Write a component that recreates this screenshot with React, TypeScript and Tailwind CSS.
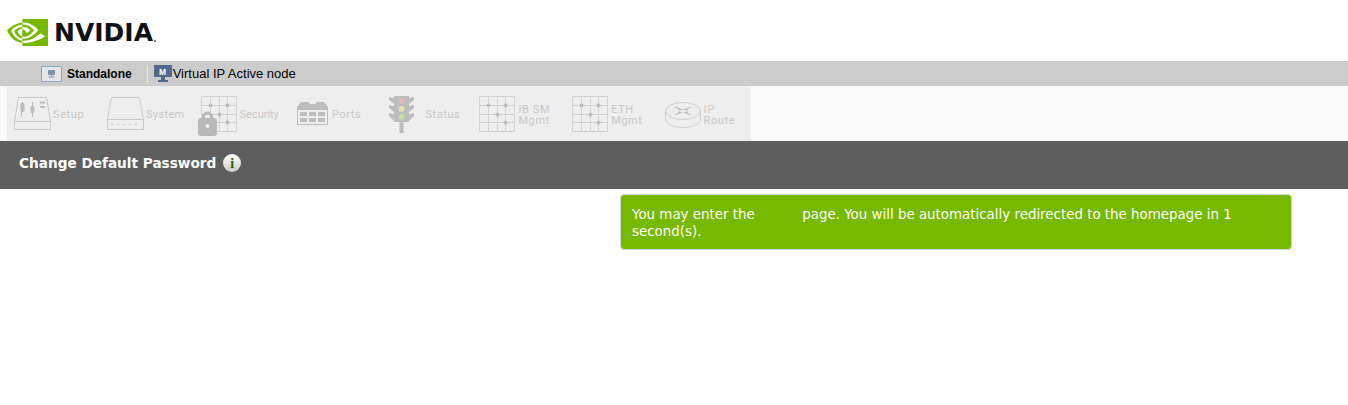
import { SiNvidia } from "react-icons/si";

const grid = "M.5 .5H35.5V35.5H.5Z M9.5 .5V35.5 M18.5 .5V35.5 M26.5 .5V35.5 M.5 9.5H35.5 M.5 18.5H35.5 M.5 26.5H35.5";

function GridDots() {
  return (
    <>
      <path d={grid} fill="none" stroke="#d2d2d2" strokeWidth="1" />
      <circle cx="9.5" cy="9.5" r="2" fill="#bdbdbd" />
      <circle cx="26.5" cy="9.5" r="2" fill="#bdbdbd" />
      <circle cx="18.5" cy="18.5" r="2" fill="#bdbdbd" />
      <circle cx="26.5" cy="26.5" r="2" fill="#bdbdbd" />
    </>
  );
}

function GridIcon() {
  return (
    <svg width="36" height="36" viewBox="0 0 36 36" className="shrink-0">
      <GridDots />
    </svg>
  );
}

function LockGridIcon() {
  return (
    <svg width="39" height="40" viewBox="0 0 39 40" className="mt-[4px] shrink-0">
      <g transform="translate(3 0)">
        <GridDots />
      </g>
      <path d="M4 21a5.5 5.5 0 0 1 11 0v3h-3v-3a2.5 2.5 0 0 0-5 0v3H4z" fill="#b8b8b8" />
      <rect x="0" y="22" width="19" height="18" rx="3" fill="#b8b8b8" />
      <circle cx="9.5" cy="30" r="2" fill="#eeeeee" />
    </svg>
  );
}

function SetupIcon() {
  return (
    <svg width="37" height="33" viewBox="0 0 37 33" className="shrink-0">
      <path d="M.5 24.5 4.5 .5H32.5L36.5 24.5V32.5H.5Z M.5 24.5H36.5" fill="none" stroke="#cacaca" />
      <path d="M7 20 8.5 5 M18.5 20V5" stroke="#bbb" />
      <rect x="6.5" y="6" width="4" height="9" rx="1.5" fill="#bbb" />
      <rect x="16.5" y="9" width="4" height="7" rx="1.5" fill="#bbb" />
      <path d="M26 5.5H31 M26 10H31" stroke="#bbb" strokeWidth="2" />
    </svg>
  );
}

function SystemIcon() {
  return (
    <svg width="37" height="33" viewBox="0 0 37 33" className="shrink-0">
      <path d="M.5 22.5 4.5 .5H32.5L36.5 22.5V32.5H.5Z M.5 22.5H36.5" fill="none" stroke="#cacaca" />
      <path d="M4 27.5H34" stroke="#cacaca" strokeWidth="1" strokeDasharray="2 4" />
    </svg>
  );
}

function PortsIcon() {
  return (
    <svg width="31" height="23" viewBox="0 0 31 23" className="shrink-0">
      <path d="M0 5 4 0H11L13 2H18L20 0H27L31 5V8H0Z" fill="#bdbdbd" />
      <path d="M.5 8V22.5H30.5V8" fill="none" stroke="#bdbdbd" />
      <path d="M3 10H10V14H3Z M12 10H19V14H12Z M21 10H28V14H21Z M3 16H10V20H3Z M12 16H19V20H12Z M21 16H28V20H21Z" fill="#bdbdbd" />
    </svg>
  );
}

function StatusIcon() {
  return (
    <svg width="25" height="37" viewBox="0 0 25 37" className="mt-[2px] shrink-0">
      <path d="M10.5 26h4v11h-4z" fill="#bdbdbd" />
      <path d="M5 0H20V2L25 1V4L20 8V10L25 9V12L20 16V18L25 17V20L19 26H6L0 20V17L5 18V16L0 12V9L5 10V8L0 4V1L5 2Z" fill="#bdbdbd" />
      <circle cx="12.5" cy="5" r="3" fill="#e8b5b5" />
      <circle cx="12.5" cy="13" r="3" fill="#e8dfa8" />
      <circle cx="12.5" cy="21" r="3" fill="#c5dc9b" />
    </svg>
  );
}

function RouteIcon() {
  return (
    <svg width="36" height="26" viewBox="0 0 36 26" className="mt-[2px] shrink-0">
      <path d="M.5 9V17C.5 22 9 25.500 18 25.500S35.500 22 35.500 17V9" fill="none" stroke="#cfcfcf" />
      <ellipse cx="18" cy="9" rx="17.500" ry="8.500" fill="none" stroke="#cfcfcf" />
      <path d="M10 5 16 7.500 13 8 M26 5 20 7.500 23 8 M10 13 16 10.500 13 10 M26 13 20 10.500 23 10" fill="none" stroke="#bdbdbd" strokeWidth="1.200" />
    </svg>
  );
}

function NavLabel({ lines, className }: { lines: string[]; className?: string }) {
  return (
    <span className={`mt-[2px] text-[11px] leading-[11px] text-[#c8c8c8] ${className ?? "tracking-[0.6px]"}`}>
      {lines.map((line) => (
        <span key={line} className="block">
          {line}
        </span>
      ))}
    </span>
  );
}

export default function App() {
  return (
    <div className="min-h-[405px] bg-white font-['Liberation_Sans',Arial,sans-serif]">
      <header className="flex h-[61px] items-center pl-[7px] pt-[3px]">
        <SiNvidia size={41} color="#76b900" className="shrink-0" />
        <span className="ml-[6px] font-['DejaVu_Sans',sans-serif] text-[25px] leading-none font-bold text-[#111]">
          NVIDIA
        </span>
        <span className="mt-[17px] ml-[1px] h-[2px] w-[2px] rounded-full bg-[#555]" />
      </header>

      <div className="flex h-[25px] items-center bg-[#cccccc] pl-[41px] text-[13px] text-black">
        <svg width="21" height="16" viewBox="0 0 21 16" className="shrink-0">
          <rect x=".5" y=".5" width="20" height="15" fill="#e4e6ea" stroke="#8fa6c4" />
          <path d="M7.500 4.500H13.500V8.500H7.500Z M10.500 8.500V10.500 M7.500 11H13.500" stroke="#7f93ab" fill="#7f93ab" />
        </svg>
        <span className="ml-[5px] text-[12px] font-semibold">Standalone</span>
        <span className="ml-[15px] h-[18px] w-px bg-[#e8e8e8]" />
        <svg width="18" height="17" viewBox="0 0 18 17" className="ml-[6px] shrink-0">
          <path d="M0 0H18V12H0Z" fill="#50688a" />
          <path d="M7 12H11V15H14V17H4V15H7Z" fill="#50688a" />
          <text x="5" y="9.500" fontFamily="Liberation Sans, Arial, sans-serif" fontWeight="700" fontSize="8.500" fill="#fff">M</text>
        </svg>
        <span className="ml-px">Virtual IP Active node</span>
      </div>

      <nav className="flex h-[55px] items-center bg-[#f9f9f9] pl-[7px]">
        <div className="flex h-[55px] w-[744px] items-center bg-[#eeeeee] font-['Roboto',sans-serif]">
          <div className="ml-[7px] flex items-center gap-[2px]">
            <SetupIcon />
            <NavLabel lines={["Setup"]} />
          </div>
          <div className="ml-[23px] flex items-center gap-[2px]">
            <SystemIcon />
            <NavLabel lines={["System"]} className="tracking-[0.3px]" />
          </div>
          <div className="ml-[13px] flex items-center gap-[3px]">
            <LockGridIcon />
            <NavLabel lines={["Security"]} className="tracking-[0px]" />
          </div>
          <div className="ml-[18px] flex items-center gap-[4px]">
            <PortsIcon />
            <NavLabel lines={["Ports"]} />
          </div>
          <div className="ml-[28px] flex items-center gap-[11px]">
            <StatusIcon />
            <NavLabel lines={["Status"]} />
          </div>
          <div className="ml-[19px] flex items-center gap-[3px]">
            <GridIcon />
            <NavLabel lines={["IB SM", "Mgmt"]} />
          </div>
          <div className="ml-[22px] flex items-center gap-[3px]">
            <GridIcon />
            <NavLabel lines={["ETH", "Mgmt"]} />
          </div>
          <div className="ml-[22px] flex items-center gap-[3px]">
            <RouteIcon />
            <NavLabel lines={["IP", "Route"]} />
          </div>
        </div>
      </nav>

      <div className="flex h-[48px] items-center bg-[#5e5e5e] pb-[4px] pl-[19px]">
        <h1 className="font-['DejaVu_Sans',Verdana,sans-serif] text-[13.65px] font-bold text-white">
          Change Default Password
        </h1>
        <span className="ml-[7px] flex h-[18px] w-[18px] items-center justify-center rounded-full bg-linear-to-b from-white to-[#c9cfc9] font-['Liberation_Serif',serif] text-[14px] font-bold text-[#2f6000]">
          i
        </span>
      </div>

      <div className="flex justify-end pr-[56px] pt-[5px]">
        <div className="h-[56px] w-[672px] rounded-[4px] border border-[#d6d6d6] bg-[#76b900] px-[11px] py-[11px] font-['DejaVu_Sans',Verdana,sans-serif] text-[13.4px] leading-[17px] text-white">
          You may enter the <span className="inline-block w-[39px]" /> page. You will be automatically redirected to the homepage in 1 second(s).
        </div>
      </div>
    </div>
  );
}
